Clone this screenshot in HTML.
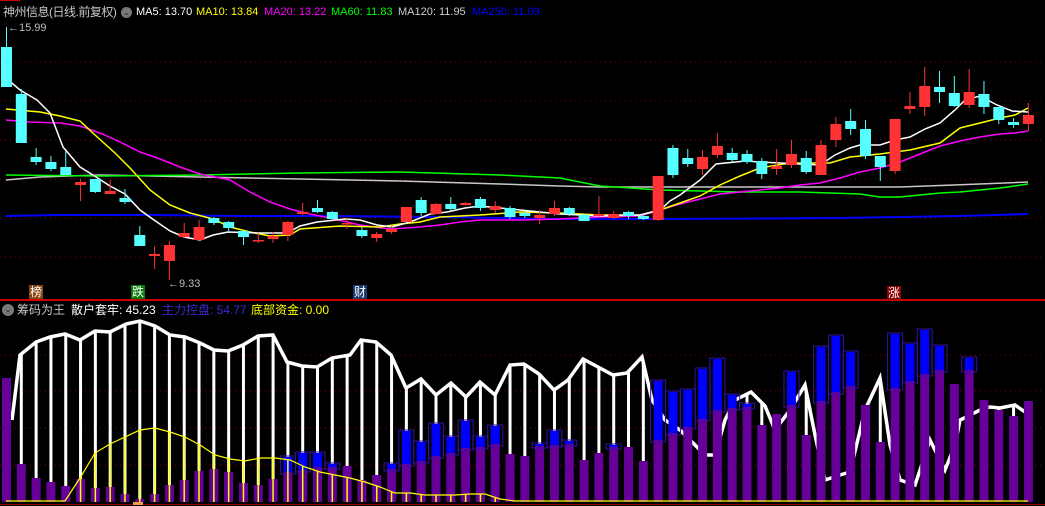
<!DOCTYPE html>
<html><head><meta charset="utf-8">
<style>
html,body{margin:0;padding:0;background:#000;width:1045px;height:506px;overflow:hidden}
body{position:relative;font-family:"Liberation Sans","Noto Sans CJK SC",sans-serif;font-size:11px}
.t{position:absolute;white-space:nowrap;line-height:14px}
svg{position:absolute;left:0;top:0}
.tag{position:absolute;width:14px;height:14px;font-size:12px;line-height:14px;text-align:center;color:#fff}
</style></head><body>
<svg id="s" width="1045" height="506" xmlns="http://www.w3.org/2000/svg"></svg>
<div class="t" style="left:3px;top:5px;color:#c8c8c8;font-size:12px;letter-spacing:-0.5px">神州信息(日线.前复权)</div>
<div style="position:absolute;left:121px;top:7px;width:11px;height:11px;border-radius:50%;background:#777;color:#222;font-size:8px;line-height:11px;text-align:center">⌄</div>
<div class="t" style="left:136px;top:5px;color:#fff">MA5: 13.70</div>
<div class="t" style="left:196px;top:5px;color:#ff0">MA10: 13.84</div>
<div class="t" style="left:264px;top:5px;color:#f0f">MA20: 13.22</div>
<div class="t" style="left:331px;top:5px;color:#0f0">MA60: 11.83</div>
<div class="t" style="left:398px;top:5px;color:#ccc">MA120: 11.95</div>
<div class="t" style="left:472px;top:5px;color:#00f">MA250: 11.09</div>
<div class="t" style="left:8px;top:21px;color:#bbb">←15.99</div>
<div class="t" style="left:168px;top:277px;color:#bbb">←9.33</div>
<div class="tag" style="left:29px;top:285px;background:#8b4513">榜</div>
<div class="tag" style="left:131px;top:285px;background:#0a7a0a">跌</div>
<div class="tag" style="left:353px;top:285px;background:#1a3a6a">财</div>
<div class="tag" style="left:887px;top:286px;background:#8b0000">涨</div>
<div style="position:absolute;left:2px;top:304px;width:12px;height:12px;border-radius:50%;background:#777;color:#222;font-size:8px;line-height:12px;text-align:center">⌄</div>
<div class="t" style="left:17px;top:303px;color:#c8c8c8;font-size:12px">筹码为王</div>
<div class="t" style="left:71px;top:303px;color:#fff;font-size:12px">散户套牢: 45.23</div>
<div class="t" style="left:162px;top:303px;color:#3a2ad0;font-size:12px">主力控盘: 54.77</div>
<div class="t" style="left:251px;top:303px;color:#ff0;font-size:12px">底部资金: 0.00</div>
<script>
var s=document.getElementById('s'),h='';
function X(i){return 6.5+i*14.81;}
function pl(p,c,w){h+='<polyline fill="none" stroke="'+c+'" stroke-width="'+w+'" points="'+p.map(function(a){return a.join(',')}).join(' ')+'"/>';}
[62,101,140,179,218,257].forEach(function(y){h+='<line x1="0" x2="1045" y1="'+y+'" y2="'+y+'" stroke="#800" stroke-dasharray="1,4"/>';});
[355,391,428,465].forEach(function(y){h+='<line x1="0" x2="1045" y1="'+y+'" y2="'+y+'" stroke="#800" stroke-dasharray="1,4"/>';});
h+='<line x1="0" x2="1045" y1="300" y2="300" stroke="#c00" stroke-width="2"/>';
h+='<line x1="0" x2="1045" y1="504.5" y2="504.5" stroke="#800" stroke-width="1"/>';
h+='<line x1="0" x2="20" y1="0.5" y2="0.5" stroke="#c00"/>';
pl([[6,216],[60,215],[150,215],[240,216],[330,216],[440,217],[560,219],[665,219],[840,218],[900,217],[960,216],[1028,214]],'#00f',2);
pl([[6,180],[40,177],[100,175],[200,177],[300,179],[400,181],[500,184],[560,186],[600,187],[700,187],[800,187],[900,187],[980,184],[1028,182]],'#c8c8c8',1.5);
pl([[6,175],[100,176],[200,175],[300,173],[400,172],[500,175],[560,178],[600,186],[660,190],[700,191],[740,192],[800,192],[860,194],[880,197],[900,197],[920,195],[940,193],[960,192],[980,190],[1000,188],[1028,184]],'#0f0',1.5);
pl([[6,120],[30,122],[60,123],[80,126],[100,133],[120,142],[140,152],[160,159],[180,167],[200,174],[230,180],[250,192],[270,202],[290,209],[310,214],[330,218],[360,225],[390,229],[420,227],[440,225],[460,222],[480,220],[520,220],[560,219],[600,217],[640,216],[660,210],[680,204],[700,199],[720,194],[750,191],[780,188],[800,185],[820,183],[840,178],[860,172],[880,168],[900,162],[920,154],[940,146],[960,141],[980,137],[1000,134],[1015,133],[1028,131]],'#f0f',1.5);
pl([[6,109],[40,112],[60,116],[80,121],[95,135],[115,153],[130,168],[150,190],[170,205],[190,213],[213,219],[230,227],[250,232],[270,236],[290,235],[300,229],[340,226],[380,227],[400,224],[420,222],[440,217],[480,215],[520,212],[560,213],[600,215],[640,215],[660,210],[680,203],[700,196],[720,185],[740,176],[760,168],[790,163],[830,163],[850,157],[880,154],[910,150],[940,143],[960,128],[980,123],[1000,118],[1015,115],[1028,108]],'#ff0',1.5);
pl([[6,78],[20,90],[37,100],[50,113],[63,147],[80,167],[93,175],[110,186],[125,194],[140,210],[154,220],[170,231],[184,237],[200,240],[213,235],[228,232],[258,233],[287,233],[300,226],[317,222],[345,219],[360,220],[377,225],[392,227],[410,222],[430,214],[447,212],[465,208],[480,206],[510,209],[560,214],[600,216],[640,215],[660,210],[670,201],[680,195],[700,180],[716,164],[745,161],[760,162],[820,165],[835,155],[850,148],[860,145],[880,145],[895,140],[910,137],[925,129],[940,123],[955,110],[965,100],[980,96],[997,105],[1012,111],[1028,112]],'#fff',1.5);
var C=[[0,47,87,27,87],[0,94,143,89,143],[0,157,162,148,165],[0,162,169,156,171],[0,167,175,151,175],[1,182,185,179,201],[0,179,192,179,193],[1,191,194,180,194],[0,198,202,189,204],[0,235,246,226,246],
[1,254,256,246,269],[1,245,261,241,280],[1,233,237,223,238],[1,227,240,220,240],[0,218,223,217,225],[0,222,228,221,231],[0,231,237,230,245],[1,240,241,233,243],[1,236,239,232,243],[1,222,235,221,241],
[1,212,214,203,215],[0,208,212,200,213],[0,212,219,211,219],[1,223,224,219,229],[0,230,236,227,238],[1,234,238,232,242],[1,229,232,226,234],[1,207,222,207,222],[0,200,213,197,216],[1,204,214,203,214],
[0,204,209,197,211],[1,203,205,202,206],[0,199,208,197,211],[1,206,210,201,213],[0,208,217,206,219],[0,213,216,211,218],[1,215,218,210,224],[1,208,214,201,216],[0,208,214,207,216],[0,215,221,214,221],
[1,214,216,196,218],[1,214,218,211,219],[0,212,216,211,219],[0,216,219,214,220],[1,176,220,176,221],[0,148,175,145,178],[0,158,164,149,167],[1,157,169,150,175],[1,146,155,133,158],[0,153,160,148,162],
[0,154,162,150,164],[0,161,174,158,179],[1,166,169,149,175],[1,154,165,140,168],[0,158,172,151,174],[1,145,175,140,175],[1,124,140,117,147],[0,121,129,109,135],[0,129,156,120,159],[0,156,167,156,181],
[1,119,171,119,174],[1,106,109,92,114],[1,86,107,67,116],[0,87,92,71,103],[0,93,106,76,107],[1,92,105,69,108],[0,94,107,81,114],[0,107,120,107,124],[0,122,125,118,128],[1,115,124,103,131]];
C.forEach(function(c,i){var x=X(i),col=c[0]?'#f33':'#5ff';
h+='<line x1="'+x+'" x2="'+x+'" y1="'+c[3]+'" y2="'+c[4]+'" stroke="'+col+'" stroke-width="1"/>';
h+='<rect x="'+(x-5.5)+'" y="'+c[1]+'" width="11" height="'+Math.max(1.5,c[2]-c[1])+'" fill="'+col+'"/>';});
var W=[[12,420],[20,355],[36,342],[50,337],[65,334],[80,340],[95,331],[110,332],[126,324],[140,321],[155,326],[170,335],[185,337],[200,343],[214,350],[228,351],[243,345],[258,336],[273,335],[287,362],[302,366],[317,367],[332,358],[350,355],[361,340],[376,342],[391,355],[406,388],[421,379],[436,395],[451,383],[466,397],[480,382],[495,395],[510,365],[524,364],[539,374],[554,390],[568,380],[583,359],[598,367],[613,375],[627,373],[642,357],[652,400],[665,420],[680,430],[695,445],[705,455],[715,455],[725,420],[735,400],[751,392],[765,406],[775,430],[790,410],[805,385],[815,435],[825,480],[840,475],[850,472],[865,410],[880,378],[890,445],[900,480],[915,485],[930,440],[945,470],[955,445],[960,420],[980,410],[990,407],[1000,408],[1015,405],[1025,412]];
function wy(x){for(var k=0;k<W.length-1;k++){if(x>=W[k][0]&&x<=W[k+1][0]){var t=(x-W[k][0])/(W[k+1][0]-W[k][0]);return W[k][1]+t*(W[k+1][1]-W[k][1]);}}return 420;}
for(var i=1;i<70;i++){var x=X(i);h+='<line x1="'+x+'" x2="'+x+'" y1="'+wy(x)+'" y2="502" stroke="#fff" stroke-width="3"/>';}
pl(W,'#fff',3.5);
var P=[378,464,478,482,486,479,488,487,494,499,494,485,480,471,469,472,483,485,479,472,470,467,467,466,480,475,469,464,461,456,453,448,447,444,454,456,446,445,444,460,453,447,447,461,440,433,427,419,410,408,407,425,414,405,435,401,392,386,405,442,388,381,374,370,384,370,400,410,416,401];
var B={19:457,20:453,21:453,22:464,26:464,27:431,28:442,29:424,30:437,31:421,32:437,33:426,36:444,37:431,38:441,41:445,44:381,45:392,46:390,47:369,48:359,49:395,50:404,53:372,55:347,56:336,57:352,60:334,61:344,62:330,63:346,65:358};
P.forEach(function(y,i){var x=X(i);h+='<rect x="'+(x-4.5)+'" y="'+y+'" width="9" height="'+(502-y)+'" fill="#660099"/>';
if(B[i]!==undefined){h+='<rect x="'+(x-4.5)+'" y="'+B[i]+'" width="9" height="'+(y-B[i])+'" fill="#0000ff"/><rect x="'+(x-7.5)+'" y="'+(B[i]-1)+'" width="15" height="'+(y-B[i]+3)+'" fill="none" stroke="#3311aa" stroke-width="1"/>';}});
var Y=[[6,501],[65,501],[80,478],[95,453],[110,444],[125,437],[140,430],[155,428],[170,432],[185,437],[200,445],[215,455],[230,459],[245,461],[260,458],[275,458],[290,460],[305,467],[320,472],[335,475],[350,478],[365,482],[380,487],[395,493],[410,493],[425,495],[440,495],[455,495],[470,494],[485,494],[500,499],[515,501],[1028,501]];
function yy(x){for(var k=0;k<Y.length-1;k++){if(x>=Y[k][0]&&x<=Y[k+1][0]){var t=(x-Y[k][0])/(Y[k+1][0]-Y[k][0]);return Y[k][1]+t*(Y[k+1][1]-Y[k][1]);}}return 501;}
for(var i=5;i<34;i++){var x=X(i);h+='<line x1="'+x+'" x2="'+x+'" y1="'+yy(x)+'" y2="502" stroke="#ff0" stroke-width="1.5"/>';}
pl(Y,'#ff0',1.2);
h+='<rect x="133" y="502" width="10" height="3" fill="#e8a040"/>';
s.innerHTML=h;
</script>
</body></html>
